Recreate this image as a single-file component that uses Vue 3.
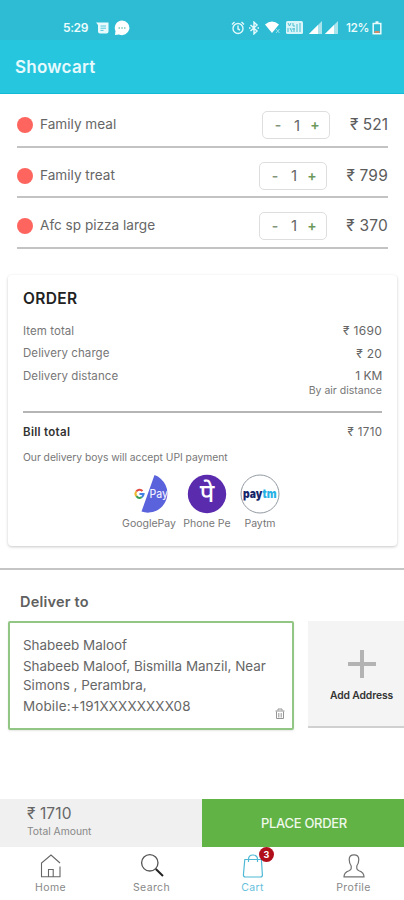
<script setup>
const items = [
  { name: 'Family meal', price: 521, first: true },
  { name: 'Family treat', price: 799 },
  { name: 'Afc sp pizza large', price: 370 }
]
</script>

<template>
  <div class="screen">
    <div class="status">
      <span class="time">5:29</span>
      <svg class="s-msg" width="13" height="12" viewBox="0 0 13 12"><path d="M0 .5h12.500V9.500q0 2-2 2H4q-2 0-2-2V3z" fill="#e9fafd"/><path d="M4.500 4h5.500M4.500 6.200h5.500M4.500 8.400h3" stroke="#2dbcd3" stroke-width=".8"/></svg>
      <svg class="s-chat" width="16" height="16" viewBox="0 0 16 16"><path d="M8 .5a7.300 7.300 0 1 1-3 13.900L1 15l.5-4A7.300 7.300 0 0 1 8 .5z" fill="#fff"/><path d="M4.500 8h1.500M7.300 8h1.500M10 8h1.500" stroke="#7ec9bd" stroke-width="1.300"/></svg>
      <span class="grow"></span>
      <svg width="14" height="14" viewBox="0 0 14 14" fill="none" stroke="#e3f8fb" stroke-width="1.400"><circle cx="7" cy="7.500" r="5"/><path d="M7 4.500V8l2 1M1 3.500 3.500 1M13 3.500 10.500 1"/></svg>
      <svg class="s-bt" width="10" height="14" viewBox="0 0 10 14" fill="none" stroke="#e3f8fb" stroke-width="1.500"><path d="m1.500 4 6.500 6-3 2.800V1.200L8 4l-6.500 6M0 7h1.500M8.500 7H10"/></svg>
      <svg class="s-wifi" width="16" height="13" viewBox="0 0 16 13"><path d="M0 3.500Q7-2.500 14 3.500L7 12z" fill="#fff"/><path d="m11 8 3.500 4M14.500 8 11 12" stroke="#9be2ee"/></svg>
      <svg class="s-volte" width="17" height="13" viewBox="0 0 17 13"><rect width="17" height="13" rx="1.500" fill="#d9f5f9"/><path d="m2 2 1.500 3L5 2M7 2v3h2M2 7v4M4 7l2 4M8 7v4M11 3v8M14 2v9M5.500 8H9" stroke="#47bfd2" fill="none"/></svg>
      <svg class="s-sig" width="13" height="13" viewBox="0 0 13 13"><path d="M0 13 13 0v13z" fill="#a9e4ed"/><path d="M0 13 9 4v9z" fill="#fff"/></svg>
      <svg class="s-sig2" width="13" height="13" viewBox="0 0 13 13"><path d="M0 13 13 0v13z" fill="#a9e4ed"/><path d="M0 13 9 4v9z" fill="#fff"/></svg>
      <span class="pct">12%</span>
      <svg width="10" height="14" viewBox="0 0 10 14"><path d="M3.500 1h3M1.200 2.500h7.600v10.300H1.200z" fill="none" stroke="#e9fafc" stroke-width="1.500"/><path d="M2.500 10h5v2h-5z" fill="#d18b69"/></svg>
    </div>
    <header class="bar">Showcart</header>

    <section class="items">
      <div v-for="i in items" :key="i.name" class="item" :class="{ first: i.first }">
        <span class="dot"></span>
        <span class="name">{{ i.name }}</span>
        <span class="stepper"><b>-</b><span>1</span><b class="plus">+</b></span>
        <span class="price">₹ {{ i.price }}</span>
      </div>
    </section>

    <section class="card">
      <h2>ORDER</h2>
      <div class="row"><span>Item total</span><span class="amt">₹ 1690</span></div>
      <div class="row"><span>Delivery charge</span><span class="amt">₹ 20</span></div>
      <div class="row"><span>Delivery distance</span><span class="amt km">1 KM</span></div>
      <div class="air">By air distance</div>
      <div class="row bill"><strong>Bill total</strong><span class="amt total-amt">₹ 1710</span></div>
      <div class="note">Our delivery boys will accept UPI payment</div>
      <div class="pays">
        <div class="pay gp">
          <svg width="40" height="40" viewBox="0 0 40 40">
            <path d="M23.500 1A19.300 19.300 0 1 1 10.500 37.500Z" fill="#5b63dc"/>
            <g fill="none" stroke-width="2"><path d="M5.200 17.500A4 4 0 0 1 11.500 17" stroke="#e04a3f"/><path d="M5.200 17.500a4 4 0 0 0 .2 4.700" stroke="#efb62c"/><path d="M5.400 22.200a4 4 0 0 0 5.300 1" stroke="#3a9e55"/><path d="M8.500 20H12.600Q12.500 22 10.700 23.200" stroke="#4280e4"/></g>
            <text x="18.500" y="24" font-size="11.500" font-weight="500" fill="#eef" textLength="18.500" lengthAdjust="spacingAndGlyphs">Pay</text>
          </svg>
          <span>GooglePay</span>
        </div>
        <div class="pay pp">
          <svg width="40" height="40" viewBox="0 0 40 40"><circle cx="20" cy="20" r="19.200" fill="#5b2bae"/><text class="deva" x="20" y="28" text-anchor="middle" font-size="25" font-weight="500" fill="#fff">पे</text></svg>
          <span>Phone Pe</span>
        </div>
        <div class="pay pt">
          <svg width="40" height="40" viewBox="0 0 40 40"><circle cx="20" cy="20" r="19" fill="#fff" stroke="#929aa2"/><text x="3" y="24" font-size="12.500" font-weight="900" fill="#16246a" textLength="33.500" lengthAdjust="spacingAndGlyphs">pay<tspan fill="#27b2e6">tm</tspan></text></svg>
          <span>Paytm</span>
        </div>
      </div>
    </section>

    <section class="deliver">
      <h3>Deliver to</h3>
      <div class="addresses">
        <div class="address">
          <p>Shabeeb Maloof</p>
          <p class="l2">Shabeeb Maloof, Bismilla Manzil, Near</p>
          <p class="l3">Simons , Perambra,</p>
          <p class="l4">Mobile:+191XXXXXXXX08</p>
          <svg class="trash" width="10" height="12" viewBox="0 0 10 12" fill="none" stroke="#959595"><path d="M.5 3h9M3 2.500V1h4v1.500M1.500 3.500v7h7v-7M3.800 5v4.500M6.200 5v4.500"/></svg>
        </div>
        <div class="add">
          <svg width="30" height="30" viewBox="0 0 30 30"><path d="M15 1v28M1 15h28" stroke="#b3b3b3" stroke-width="4"/></svg>
          <span>Add Address</span>
        </div>
      </div>
    </section>

    <div class="checkout">
      <div class="total"><span class="t1">₹ 1710</span><span class="t2">Total Amount</span></div>
      <div class="place">PLACE ORDER</div>
    </div>
    <nav>
      <div class="tab"><svg width="24" height="26" viewBox="0 0 24 26" fill="none" stroke="#666" stroke-width="1.100"><path d="M21 13.500V23.800H2.500V10L12 2l9 8M9.500 23.800V16.500h4.700v7.300"/></svg><span>Home</span></div>
      <div class="tab"><svg width="24" height="26" viewBox="0 0 24 26" fill="none" stroke="#555" stroke-width="1.300"><circle cx="9.800" cy="9.800" r="8.200"/><path d="m15.800 16 7.200 7" stroke="#222" stroke-width="2"/></svg><span>Search</span></div>
      <div class="tab active"><svg width="24" height="26" viewBox="0 0 24 26" fill="none" stroke="#4fb9d5" stroke-width="1.200"><path d="M3.800 6.500h16.600l1 15.500q0 2-2 2h-15q-2 0-2-2zM7.500 9V6.500q0-4.500 4.500-4.500t4.500 4.500V9"/></svg><span>Cart</span><i class="badge">3</i></div>
      <div class="tab"><svg width="24" height="26" viewBox="0 0 24 26" fill="none" stroke="#707070" stroke-width="1.200"><path d="M12 1.800q-4.800 0-4.800 4.700 0 3.700 2 6.500v2.500q0 1.300-2.200 2.200-5 1.700-5 6.100h20q0-4.400-5-6.100-2.200-.9-2.200-2.200V13q2-2.800 2-6.500 0-4.700-4.800-4.700z"/></svg><span>Profile</span></div>
    </nav>
  </div>
</template>

<style>
body { background: #fff; }
</style>

<style scoped>
.screen { width: 404px; height: 900px; overflow: hidden; display: flex; flex-direction: column; background: #fff; font-family: Inter, "Liberation Sans", sans-serif; color: #666; line-height: 1; }
.screen * { box-sizing: border-box; }
svg { display: block; flex: none; }
p, h2, h3 { margin: 0; }
.status { height: 40px; background: #2dbcd3; display: flex; align-items: center; padding: 15px 22px 0 63px; color: #effcfd; font-size: 12px; font-weight: 600; flex: none; }
.time { width: 33px; letter-spacing: -.4px; }
.s-chat { margin-left: 5px; }
.grow { flex: 1; }
.s-bt { margin-left: 4px; }
.s-wifi { margin-left: 6px; }
.s-volte { margin-left: 5px; }
.s-sig { margin-left: 6px; }
.s-sig2 { margin-left: 3px; }
.pct { width: 26px; margin-left: 8px; letter-spacing: -.5px; font-weight: 500; }
.bar { height: 54px; flex: none; background: #27c6df; border-bottom: 1px solid #12bad5; display: flex; align-items: center; padding: 2px 0 0 15px; font-size: 17px; letter-spacing: .25px; font-weight: 600; color: #e6fafd; }
.items { padding: 4px 16px 0 17px; }
.item { height: 50px; border-bottom: 2px solid #c3c3c3; display: flex; align-items: center; padding-top: 7px; }
.item.first { padding-top: 6px; }
.item:last-child { height: 51px; padding-top: 6px; }
.dot { width: 16px; height: 16px; border-radius: 50%; background: #ff655f; }
.name { flex: 1; margin-left: 7px; font-size: 13.600px; }
.stepper { width: 68px; height: 28px; margin-right: 19px; border: 1px solid #dedede; border-radius: 5px; display: grid; grid-template-columns: 20px 18px 18px; justify-content: center; align-items: center; text-align: center; font-size: 15px; }
.stepper b { color: #829579; font-size: 14px; font-weight: 600; }
.stepper .plus { color: #6c985a; }
.price { width: 42px; font-size: 15.500px; letter-spacing: .2px; color: #5c5c5c; white-space: nowrap; text-align: right; }
.first .price { width: 39px; letter-spacing: 0; }
.card { margin: 26px 7px 0 8px; height: 271px; flex: none; padding: 15px 15px 0; border-radius: 4px; background: #fff; box-shadow: 0 1px 3px rgba(0,0,0,.22); }
h2 { height: 30px; font-size: 15.500px; line-height: 17px; font-weight: 600; color: #222; letter-spacing: .35px; }
.row { display: flex; justify-content: space-between; align-items: center; height: 22.600px; font-size: 11.500px; letter-spacing: .07px; color: #777; }
.amt { font-size: 12px; letter-spacing: .35px; margin-right: -.3px; color: #666; }
.km { letter-spacing: 0; }
.total-amt { font-size: 11.500px; }
.air { text-align: right; font-size: 10.500px; height: 25px; line-height: 6px; border-bottom: 2px solid #b5b5b5; color: #777; }
.row.bill { margin-top: 9px; }
.bill strong { color: #333; font-weight: 600; letter-spacing: .3px; }
.note { margin-top: 7px; font-size: 10.300px; line-height: 12px; color: #777; letter-spacing: -.03px; }
.pays { display: flex; margin: 11px 0 0 98px; }
.pay { display: flex; flex-direction: column; align-items: center; font-size: 10.500px; color: #777; }
.pay span { margin-top: 5px; white-space: nowrap; }
.gp { width: 56px; }
.gp svg { margin-left: 4px; }
.pp { width: 60px; }
.pt { width: 46px; }
.deva { font-family: "Noto Sans", "Noto Sans Devanagari", sans-serif; }
.deliver { margin-top: 22px; border-top: 2px solid #c5c5c5; }
h3 { padding: 23px 0 0 20px; font-size: 14.500px; line-height: 18px; font-weight: 600; color: #606060; letter-spacing: .2px; }
.addresses { display: flex; margin: 10px 0 0 8px; gap: 14px; align-items: flex-start; }
.address { position: relative; width: 286px; height: 109px; flex: none; padding: 14px 0 0 13px; border: 2px solid #91c685; border-radius: 2px; font-size: 13.450px; line-height: 16px; white-space: nowrap; box-shadow: 0 1px 2px rgba(0,0,0,.1); }
.l2 { margin-top: 5px; }
.l3 { margin-top: 3px; }
.l4 { margin-top: 5px; letter-spacing: .15px; }
.trash { position: absolute; right: 7px; bottom: 8px; }
.add { flex: 1; height: 107px; padding-top: 28px; padding-left: 11px; display: flex; flex-direction: column; align-items: center; background: #f4f4f4; border-bottom: 2px solid #d0d0d0; font-size: 10.300px; font-weight: 600; color: #333; white-space: nowrap; }
.add span { margin-top: 11px; letter-spacing: -.1px; }
.checkout { display: flex; height: 48px; flex: none; margin-top: auto; }
.total { width: 202px; background: #f0f0f0; padding: 7px 0 0 27px; display: flex; flex-direction: column; }
.t1 { font-size: 15.500px; letter-spacing: .1px; }
.t2 { margin-top: 4px; font-size: 10.300px; color: #888; }
.place { flex: 1; background: #61b345; color: #eef8eb; display: flex; align-items: center; justify-content: center; padding-left: 2px; font-size: 13px; font-weight: 500; letter-spacing: -.3px; }
nav { display: grid; grid-template-columns: repeat(4, 1fr); height: 53px; flex: none; }
.tab { position: relative; display: flex; flex-direction: column; align-items: center; padding-top: 6px; font-size: 10.500px; color: #888; letter-spacing: .4px; }
.tab span { margin-top: 4px; }
.active { color: #66c0dc; }
.badge { position: absolute; left: 57px; top: 0; width: 15px; height: 15px; border-radius: 50%; background: #b10e1c; color: #fff; font: 700 9px/15px Inter, sans-serif; text-align: center; letter-spacing: 0; }
</style>
